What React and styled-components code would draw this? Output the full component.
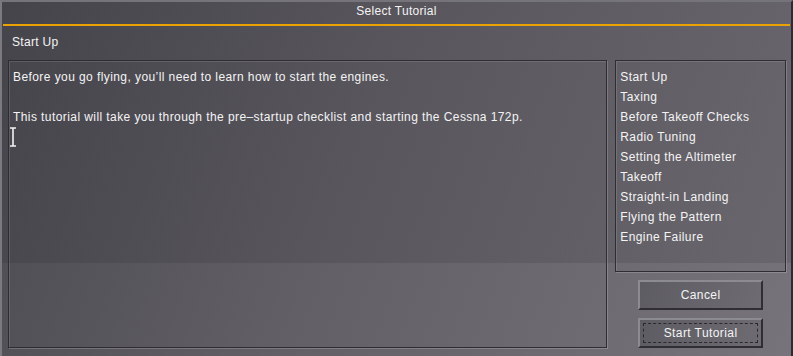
import React from 'react'
import styled, { createGlobalStyle } from 'styled-components'

const GlobalStyle = createGlobalStyle`
    html, body {
        margin: 0;
        padding: 0;
        background: #3a393e;
    }
    body {
        font-family: "Liberation Sans", Arial, sans-serif;
        font-size: 12px;
    }
`

const Window = styled.div`
    position: relative;
    width: 793px;
    height: 356px;
    box-sizing: border-box;
    border-left: 2px solid #7b7a80;
    border-top: 2px solid #75747a;
    border-right: 2px solid #2c2b30;
    display: flex;
    flex-direction: column;
    overflow: hidden;
    color: #f4f4f4;
    background:
        linear-gradient(to bottom, rgba(20, 18, 26, 0.12) 0, rgba(20, 18, 26, 0.12) 261px, transparent 261px),
        linear-gradient(110deg, #4c4b52 0%, #625f66 45%, #76747a 100%);
`

const TitleBar = styled.div`
    height: 23px;
    line-height: 19px;
    text-align: center;
    letter-spacing: 0.3px;
`

const Rule = styled.div`
    height: 2px;
    margin: 0 1px 0 1px;
    background: #e9a200;
`

const Heading = styled.div`
    height: 35px;
    line-height: 32px;
    padding-left: 10px;
    letter-spacing: 0.3px;
`

const Body = styled.div`
    display: flex;
    gap: 8px;
    padding: 0 5px 0 6px;
    flex: 1;
`

const Sunken = styled.div`
    box-sizing: border-box;
    border: 1px solid #2e2d32;
    box-shadow: inset 1px 1px 0 rgba(255, 255, 255, 0.12), 1px 1px 0 rgba(255, 255, 255, 0.18);
`

const TextPanel = styled(Sunken)`
    width: 600px;
    height: 288px;
    padding: 6px 0 0 4px;
    line-height: 20px;
    letter-spacing: 0.42px;
    p {
        margin: 0 0 20px 0;
    }
`

const Side = styled.div`
    width: 171px;
    display: flex;
    flex-direction: column;
    align-items: center;
`

const ListPanel = styled(Sunken)`
    align-self: stretch;
    height: 212px;
    padding: 6px 0 0 4px;
    margin-bottom: 8px;
`

const ListItem = styled.div`
    line-height: 20px;
    letter-spacing: 0.42px;
`

const Button = styled.div`
    position: relative;
    box-sizing: border-box;
    width: 125px;
    height: 30px;
    margin-bottom: 8px;
    display: flex;
    align-items: center;
    justify-content: center;
    letter-spacing: 0.42px;
    border-top: 2px solid #8d8b92;
    border-left: 2px solid #8d8b92;
    border-right: 2px solid #2f2e33;
    border-bottom: 2px solid #2f2e33;
    background: linear-gradient(110deg, #5d5c62, #6e6c72);
    ${p => p.focused && `
        &::after {
            content: '';
            position: absolute;
            left: 3px;
            top: 3px;
            right: 3px;
            bottom: 3px;
            border: 1px dashed #2a292e;
        }
    `}
`

const Cursor = styled.svg`
    position: absolute;
    left: 7px;
    top: 124px;
`

const tutorials = [
    'Start Up',
    'Taxing',
    'Before Takeoff Checks',
    'Radio Tuning',
    'Setting the Altimeter',
    'Takeoff',
    'Straight-in Landing',
    'Flying the Pattern',
    'Engine Failure',
]

export default function App() {
    return (
        <>
            <GlobalStyle />
            <Window>
                <TitleBar>Select Tutorial</TitleBar>
                <Rule />
                <Heading>Start Up</Heading>
                <Body>
                    <TextPanel>
                        <p>Before you go flying, you’ll need to learn how to start the engines.</p>
                        <p>This tutorial will take you through the pre–startup checklist and starting the Cessna 172p.</p>
                    </TextPanel>
                    <Side>
                        <ListPanel>
                            {tutorials.map(t => (
                                <ListItem key={t}>{t}</ListItem>
                            ))}
                        </ListPanel>
                        <Button>Cancel</Button>
                        <Button focused>Start Tutorial</Button>
                    </Side>
                </Body>
                {/* mouse pointer caught in the screenshot */}
                <Cursor width="8" height="22" viewBox="0 0 8 22">
                    <path d="M1 2h6M4 2v18M1 20h6" stroke="#f2f2f2" strokeWidth="1.6" fill="none" />
                </Cursor>
            </Window>
        </>
    )
}
